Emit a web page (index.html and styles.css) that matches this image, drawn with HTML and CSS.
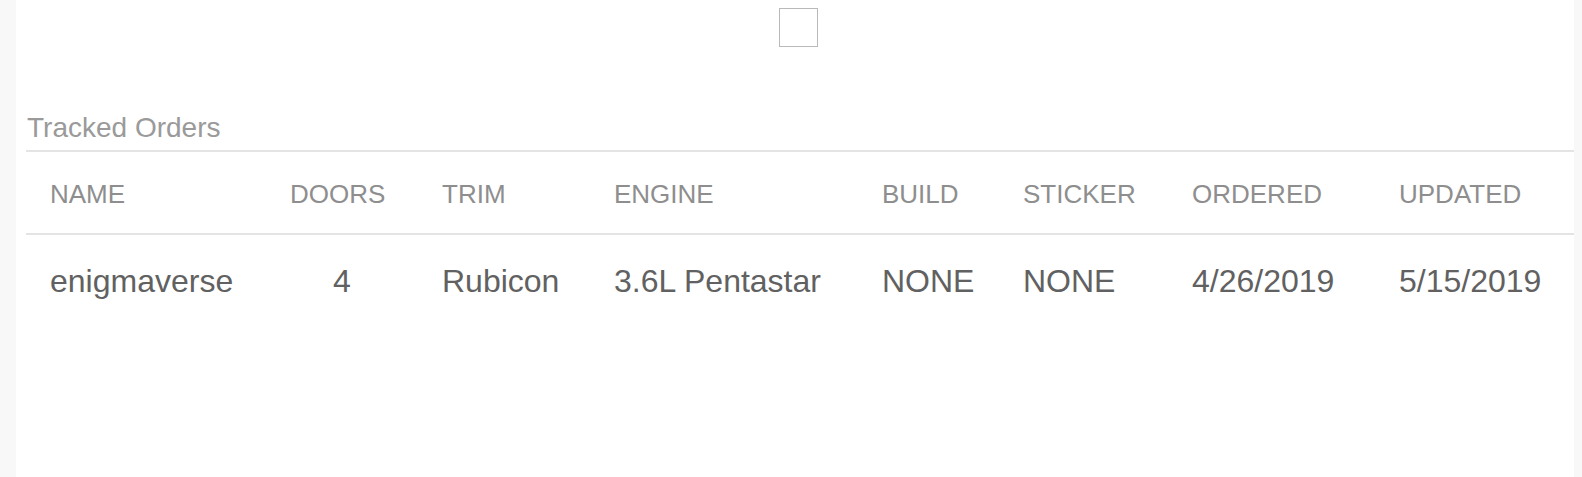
FILE: index.html
```html
<!DOCTYPE html>
<html lang="en">
<head>
<meta charset="utf-8">
<title>Tracked Orders</title>
<link rel="stylesheet" href="styles.css">
</head>
<body>
<main class="panel">
  <div class="toggle-row">
    <span class="checkbox" role="checkbox" aria-checked="false"></span>
  </div>
  <h2 class="section-title">Tracked Orders</h2>
  <table class="orders">
    <colgroup>
      <col class="c-name">
      <col class="c-doors">
      <col class="c-trim">
      <col class="c-engine">
      <col class="c-build">
      <col class="c-sticker">
      <col class="c-ordered">
      <col class="c-updated">
    </colgroup>
    <thead>
      <tr>
        <th>NAME</th>
        <th>DOORS</th>
        <th>TRIM</th>
        <th>ENGINE</th>
        <th>BUILD</th>
        <th>STICKER</th>
        <th>ORDERED</th>
        <th>UPDATED</th>
      </tr>
    </thead>
    <tbody>
      <tr>
        <td>enigmaverse</td>
        <td class="center">4</td>
        <td>Rubicon</td>
        <td>3.6L Pentastar</td>
        <td>NONE</td>
        <td>NONE</td>
        <td>4/26/2019</td>
        <td>5/15/2019</td>
      </tr>
    </tbody>
  </table>
</main>
</body>
</html>
```

FILE: styles.css
```css
html, body {
  margin: 0;
  padding: 0;
  background: #f8f8f8;
  font-family: "Liberation Sans", Arial, Helvetica, sans-serif;
}

.panel {
  margin: 0 8px 0 16px;
  padding: 8px 0 0 10px;
  height: 477px;
  box-sizing: border-box;
  background: #ffffff;
}

.toggle-row {
  display: flex;
  justify-content: center;
}

.checkbox {
  display: block;
  width: 37px;
  height: 37px;
  margin-right: 3px;
  border: 1px solid #b9b9b9;
  background: #ffffff;
}

.section-title {
  margin: 65px 0 0 0;
  padding: 0 0 6px 1px;
  font-size: 28px;
  line-height: 32px;
  font-weight: normal;
  color: #9a9a9a;
}

.orders {
  width: 100%;
  border-collapse: collapse;
  table-layout: fixed;
  border-top: 2px solid #e4e4e4;
}

.c-name { width: 240px; }
.c-doors { width: 152px; }
.c-trim { width: 172px; }
.c-engine { width: 268px; }
.c-build { width: 141px; }
.c-sticker { width: 169px; }
.c-ordered { width: 207px; }
.c-updated { width: 199px; }

.orders th {
  padding: 27px 24px 24px 24px;
  font-size: 26px;
  line-height: 30px;
  font-weight: normal;
  text-align: left;
  color: #8e8e8e;
  border-bottom: 2px solid #e4e4e4;
  white-space: nowrap;
}

.orders td {
  padding: 28px 24px 28px 24px;
  font-size: 32px;
  line-height: 36px;
  color: #616161;
  text-align: left;
  white-space: nowrap;
}

.orders td.center {
  text-align: center;
}
```
